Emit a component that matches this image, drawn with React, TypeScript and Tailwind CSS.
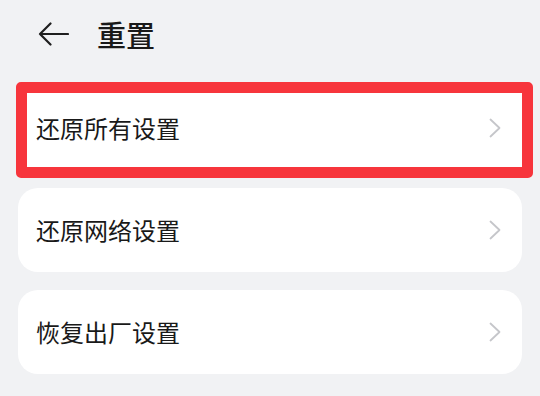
import React from "react";

const Chevron = () => (
  <svg width="12" height="20" viewBox="0 0 12 20" fill="none">
    <path d="M1.5 1.5 L10.5 10 L1.5 18.5" stroke="#c5c6ca" strokeWidth="1.8" strokeLinecap="round" strokeLinejoin="round" />
  </svg>
);

const Row = ({ label }: { label: string }) => (
  <div className="relative flex h-[84px] items-center justify-between pl-[18px] pr-[21px]">
    <span className="text-[24px] leading-none text-[#191919]">{label}</span>
    <Chevron />
  </div>
);

export default function App() {
  return (
    <div
      className="h-[396px] w-[540px] overflow-hidden bg-[#f1f2f4]"
      style={{ fontFamily: '"Noto Sans CJK SC", "Noto Sans", sans-serif' }}
    >
      <div className="flex h-[68px] items-center pl-[38px]">
        <svg width="31" height="24" viewBox="0 0 31 24" fill="none">
          <path d="M30 12 H2 M12.5 1.5 L2 12 L12.5 22.5" stroke="#1f1f1f" strokeWidth="2.2" strokeLinecap="round" strokeLinejoin="round" />
        </svg>
        <span className="ml-[28px] text-[29px] font-medium leading-none text-[#191919]">重置</span>
      </div>
      <div className="flex flex-col gap-[18px] px-[18px] pt-[18px]">
        <div className="relative rounded-[20px] bg-white">
          <div className="absolute left-[-2px] top-[-4px] h-[96px] w-[517px] rounded-[5px] border-[11px] border-[#f7353c] bg-white" />
          <Row label="还原所有设置" />
        </div>
        <div className="rounded-[20px] bg-white">
          <Row label="还原网络设置" />
        </div>
        <div className="rounded-[20px] bg-white">
          <Row label="恢复出厂设置" />
        </div>
      </div>
    </div>
  );
}
